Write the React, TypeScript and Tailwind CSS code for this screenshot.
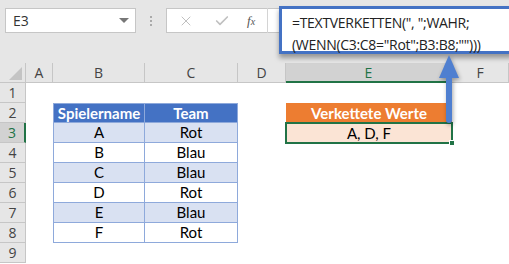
import { X, Check } from "lucide-react";

const rows = [
  { name: "Spielername", team: "Team", head: true },
  { name: "A", team: "Rot" },
  { name: "B", team: "Blau" },
  { name: "C", team: "Blau" },
  { name: "D", team: "Rot" },
  { name: "E", team: "Blau" },
  { name: "F", team: "Rot" },
];

const colHeads = ["A", "B", "C", "D", "E", "F"];

function App() {
  return (
    <div className="relative w-[509px] h-[264px] overflow-hidden bg-white font-['Open_Sans',sans-serif]">
      {/* top bar */}
      <div className="h-[63px] bg-[#e6e6e6] flex items-start pt-[8px] pl-[5px]">
        <div className="w-[131px] h-[25px] bg-white border border-[#c6c6c6] flex items-center justify-between pl-[7px] pr-[6px]">
          <span className="text-[14px] text-[#333] leading-none">E3</span>
          <span className="w-0 h-0 border-l-[5px] border-r-[5px] border-t-[5px] border-l-transparent border-r-transparent border-t-[#777]" />
        </div>
        <div className="w-[30px] h-[25px] flex flex-col items-center justify-center gap-[2px]">
          <span className="w-[2px] h-[2px] bg-[#aaa]" />
          <span className="w-[2px] h-[2px] bg-[#aaa]" />
          <span className="w-[2px] h-[2px] bg-[#aaa]" />
        </div>
        <div className="flex-1 h-[25px] bg-white border border-[#c6c6c6] border-r-0 flex items-center">
          <X className="ml-[11px] text-[#c0c0c0]" size={16} strokeWidth={1.5} />
          <Check className="ml-[20px] text-[#c0c0c0]" size={16} strokeWidth={2.5} />
          <span className="ml-[17px] text-[13px] italic text-[#555] font-['Liberation_Serif',serif]">
            f<span className="text-[10px]">x</span>
          </span>
          <span className="ml-[12px] w-px h-[25px] bg-[#d4d4d4]" />
        </div>
      </div>

      {/* sheet */}
      <div className="grid grid-cols-[26px_27px_92px_93px_48px_166px_57px] grid-rows-[20px_repeat(9,20px)] text-[15px] font-['Lato',sans-serif]">
        <div className="bg-[#e6e6e6] border-r border-b border-[#c6c6c6] flex items-end justify-end pr-[3px] pb-[2px]">
          <svg width="13" height="13" viewBox="0 0 13 13">
            <polygon points="13,0 13,13 0,13" fill="#c4c4c4" />
          </svg>
        </div>
        {colHeads.map((c) => (
          <div
            key={c}
            className={
              c === "E"
                ? "bg-[#d2d2d2] border-r border-[#c6c6c6] border-b-2 border-b-[#217346] text-[#217346] flex items-center justify-center text-[14px] font-['Open_Sans',sans-serif]"
                : "bg-[#e6e6e6] border-r border-b border-[#c6c6c6] text-[#444] flex items-center justify-center text-[14px] font-['Open_Sans',sans-serif]"
            }
          >
            {c}
          </div>
        ))}

        {Array.from({ length: 9 }, (_, i) => {
          const r = i + 1;
          const t = r >= 2 && r <= 8 ? rows[r - 2] : null;
          const band = r === 3 || r === 5 || r === 7;
          const cellBase =
            "border-r border-b border-[#8ea9db] flex items-center justify-center";
          const cellColor = t?.head
            ? "bg-[#4472c4] text-white font-bold border-t"
            : band
            ? "bg-[#d9e1f2] text-black"
            : "bg-white text-black";
          return [
            <div
              key={`h${r}`}
              className={
                r === 3
                  ? "bg-[#d2d2d2] border-b border-[#c6c6c6] border-r-2 border-r-[#217346] text-[#217346] flex items-center justify-center text-[14px] font-['Open_Sans',sans-serif]"
                  : "bg-[#e6e6e6] border-r border-b border-[#c6c6c6] text-[#444] flex items-center justify-center text-[14px] font-['Open_Sans',sans-serif]"
              }
            >
              {r}
            </div>,
            <div key={`a${r}`} />,
            t ? (
              <div key={`b${r}`} className={`${cellBase} ${cellColor} border-l`}>
                {t.name}
              </div>
            ) : (
              <div key={`b${r}`} />
            ),
            t ? (
              <div key={`c${r}`} className={`${cellBase} ${cellColor}`}>
                {t.team}
              </div>
            ) : (
              <div key={`c${r}`} />
            ),
            <div key={`d${r}`} />,
            r === 2 ? (
              <div
                key={`e${r}`}
                className="bg-[#ed7d31] text-white font-bold flex items-center justify-center"
              >
                Verkettete Werte
              </div>
            ) : r === 3 ? (
              <div
                key={`e${r}`}
                className="relative bg-[#fbe4d5] text-black flex items-center justify-center"
              >
                A, D, F
                <span className="absolute -inset-[1px] border-2 border-[#217346]" />
                <span className="absolute -right-[3px] -bottom-[3px] w-[6px] h-[6px] bg-[#217346] border border-white" />
              </div>
            ) : (
              <div key={`e${r}`} />
            ),
            <div key={`f${r}`} />,
          ];
        })}
      </div>

      {/* enlarged formula callout */}
      <div className="absolute left-[279px] top-[6px] w-[234px] h-[48px] bg-white border-[3px] border-[#4472c4] shadow-[0_4px_5px_rgba(0,0,0,0.35)] pl-[10px] pt-[3px] text-[14px] tracking-[-0.3px] leading-[22px] text-[#222] font-['Open_Sans',sans-serif] whitespace-nowrap">
        <div>=TEXTVERKETTEN(", ";WAHR;</div>
        <div>(WENN(C3:C8="Rot";B3:B8;"")))</div>
      </div>

      {/* arrow */}
      <svg
        className="absolute left-[436px] top-[54px] drop-shadow-[1px_2px_2px_rgba(0,0,0,0.35)]"
        width="26"
        height="72"
        viewBox="0 0 26 72"
      >
        <polygon points="13,1 3,24 23,24" fill="#4f7fd0" />
        <rect x="10" y="22" width="6" height="47" rx="3" fill="#4f7fd0" />
      </svg>
    </div>
  );
}

export default App;
